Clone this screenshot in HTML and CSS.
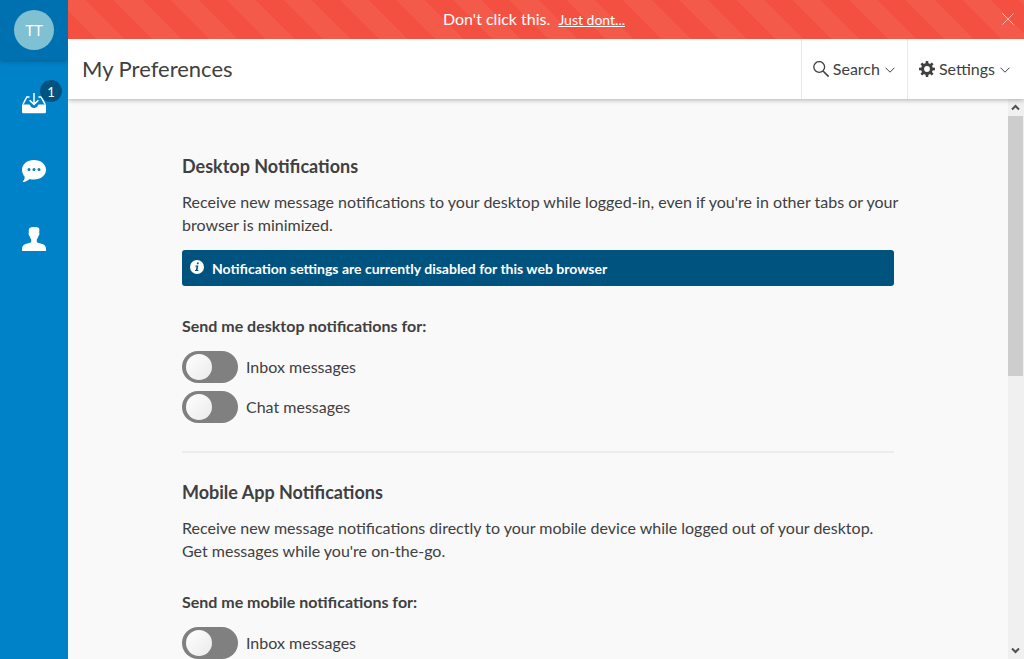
FILE: index.html
```
<!DOCTYPE html>
<html lang="en">
<head>
<meta charset="utf-8">
<meta name="viewport" content="width=device-width, initial-scale=1">
<title>My Preferences</title>
<link rel="stylesheet" href="styles.css">
</head>
<body class="app">
<nav class="sidebar" aria-label="Main">
  <a class="profile" href="#profile"><span class="avatar">TT</span></a>
  <a class="nav-item" href="#inbox" aria-label="Inbox">
    <svg class="nav-icon" viewBox="0 -1 24 24" aria-hidden="true">
      <path d="M7.500 5H4.800L.9 12.500M16.500 5h2.700l3.900 7.500" fill="none" stroke="#fff" stroke-width="1.500"/>
      <path d="M0 12.500h7c.6 0 1 .4 1.200 1 .4 1.500 1.900 2.500 3.800 2.500s3.400-1 3.800-2.500c.2-.6.6-1 1.200-1h7v7.200c0 1-.6 1.600-1.600 1.600H1.600c-1 0-1.600-.6-1.600-1.600z" fill="#fff"/>
      <path d="M12 1v11.200M7.600 8.200l4.400 4.200 4.400-4.200" fill="none" stroke="#fff" stroke-width="1.500"/>
    </svg>
    <span class="badge">1</span>
  </a>
  <a class="nav-item" href="#chat" aria-label="Chat">
    <svg class="nav-icon" viewBox="0 0 24 24" aria-hidden="true">
      <path d="M12 1c6.700 0 12 4.200 12 9.800s-5.300 9.800-12 9.800c-1.500 0-2.900-.2-4.200-.6-1.900 1.600-4.200 2.700-6.500 3-.5 0-.6-.5-.2-.8 1.300-1.300 1.700-2.700 1.500-4.600C1 15.900 0 13.500 0 10.800 0 5.200 5.300 1 12 1z" fill="#fff"/>
      <g fill="#0082c8"><circle cx="7" cy="10.500" r="1.500"/><circle cx="12" cy="10.500" r="1.500"/><circle cx="17" cy="10.500" r="1.500"/></g>
    </svg>
  </a>
  <a class="nav-item" href="#people" aria-label="People">
    <svg class="nav-icon" viewBox="0 0 24 24" aria-hidden="true">
      <path d="M7.200 1.600C8.300.3 10.200 0 12.400 0c2.700 0 5 .5 5 2.600 0 1-.2 2-.3 2.900.6.4.4 1.500.1 2.300-.2.800-.5 1.300-.9 1.500-.3 1.300-.8 2.400-1.500 3.200v2.200c.2.600 1 .9 2 1.200l3.600 1.200c2.200.8 3.600 2.300 3.600 5V24H0v-1.900c0-2.700 1.400-4.200 3.600-5l3.600-1.200c1-.3 1.800-.6 2-1.200v-2.200c-.7-.8-1.200-1.900-1.500-3.200-.4-.2-.7-.7-.9-1.500-.3-.8-.5-1.900.1-2.300-.1-1.300-.4-2.700.3-3.900z" fill="#fff"/>
    </svg>
  </a>
</nav>
<div class="workspace">
  <div class="banner" role="alert">
    <p class="banner-text">Don't click this. <a class="banner-link" href="#dont">Just dont...</a></p>
    <button class="banner-close" type="button" aria-label="Dismiss">
      <svg class="close-icon" viewBox="0 0 14 14" aria-hidden="true"><path d="M.5.500l13 13M13.500.500l-13 13" fill="none" stroke="#fff" stroke-opacity=".65" stroke-width="1.100"/></svg>
    </button>
  </div>
  <header class="toolbar">
    <h1 class="title">My Preferences</h1>
    <button class="tool" type="button">
      <svg class="tool-icon" viewBox="0 0 16 16" aria-hidden="true"><circle cx="6.200" cy="6" r="5.400" fill="none" stroke="#404041" stroke-width="1.300"/><path d="M10 10l5.600 5.600" stroke="#404041" stroke-width="1.600"/></svg>
      <span class="tool-label">Search</span>
      <svg class="chevron" viewBox="0 0 10 6" aria-hidden="true"><path d="M.5.700L5 5.200 9.500.700" fill="none" stroke="#404041"/></svg>
    </button>
    <button class="tool" type="button">
      <svg class="tool-icon" viewBox="0 0 16 16" aria-hidden="true"><g fill="#404041"><path fill-rule="evenodd" d="M8 2.100a5.900 5.900 0 1 0 0 11.800A5.900 5.900 0 0 0 8 2.100zm0 3a2.900 2.900 0 1 1 0 5.800 2.900 2.900 0 0 1 0-5.800z"/><path id="tooth" d="M6.500 3l.3-3h2.400l.3 3zM6.500 13l.3 3h2.400l.3-3z"/><use href="#tooth" transform="rotate(45 8 8)"/><use href="#tooth" transform="rotate(90 8 8)"/><use href="#tooth" transform="rotate(135 8 8)"/></g></svg>
      <span class="tool-label">Settings</span>
      <svg class="chevron" viewBox="0 0 10 6" aria-hidden="true"><path d="M.5.700L5 5.200 9.500.700" fill="none" stroke="#404041"/></svg>
    </button>
  </header>
  <div class="body">
    <main class="content">
      <section class="section">
        <h2 class="heading">Desktop Notifications</h2>
        <p class="copy">Receive new message notifications to your desktop while logged-in, even if you're in other tabs or your browser is minimized.</p>
        <p class="notice">
          <svg class="info-icon" viewBox="0 0 14 14" aria-hidden="true"><circle cx="7" cy="7" r="7" fill="#fff"/><path d="M7.100 2.500h1.800l-.4 1.800H6.700zM5.500 5.400h2.900L7.500 9.900h.9l-.2 1H4.900l.2-1h.7l.7-3.500h-1.200z" fill="#00537f"/></svg>
          <span>Notification settings are currently disabled for this web browser</span>
        </p>
        <fieldset class="options">
          <legend class="legend">Send me desktop notifications for:</legend>
          <label class="option"><input class="toggle" type="checkbox"><span class="option-text">Inbox messages</span></label>
          <label class="option"><input class="toggle" type="checkbox"><span class="option-text">Chat messages</span></label>
        </fieldset>
      </section>
      <section class="section">
        <h2 class="heading">Mobile App Notifications</h2>
        <p class="copy">Receive new message notifications directly to your mobile device while logged out of your desktop. Get messages while you're on-the-go.</p>
        <fieldset class="options">
          <legend class="legend">Send me mobile notifications for:</legend>
          <label class="option"><input class="toggle" type="checkbox"><span class="option-text">Inbox messages</span></label>
        </fieldset>
      </section>
    </main>
    <div class="scrollbar" aria-hidden="true">
      <svg class="scroll-arrow" viewBox="0 0 16 17"><path d="M4 10.500L7.500 7l3.500 3.500" fill="none" stroke="#505050" stroke-width="2"/></svg>
      <div class="scroll-track"><div class="scroll-thumb"></div></div>
      <svg class="scroll-arrow" viewBox="0 0 16 17"><path d="M4 6.500L7.500 10l3.500-3.500" fill="none" stroke="#505050" stroke-width="2"/></svg>
    </div>
  </div>
</div>
</body>
</html>
```
FILE: styles.css
```
* { box-sizing: border-box; }

.app {
  margin: 0;
  height: 100vh;
  display: flex;
  overflow: hidden;
  background: #f9f9f9;
  color: #404041;
  font: 16px/23px Lato, "Liberation Sans", sans-serif;
}

button { font: inherit; color: inherit; border: 0; background: none; cursor: pointer; }

.sidebar {
  flex: 0 0 68px;
  display: flex;
  flex-direction: column;
  background: #0082c8;
}
.profile {
  display: flex;
  align-items: center;
  justify-content: center;
  height: 60px;
  margin-bottom: 9px;
  background: #0071b0;
  box-shadow: 0 1px 5px rgba(0, 0, 0, .3);
  text-decoration: none;
}
.avatar {
  width: 40px;
  height: 40px;
  border-radius: 50%;
  background: #7fc0d3;
  color: #fff;
  font-size: 15px;
  line-height: 41px;
  text-align: center;
}
.nav-item {
  position: relative;
  display: flex;
  align-items: center;
  justify-content: center;
  height: 68px;
}
.nav-icon { width: 24px; height: 24px; }
.badge {
  position: absolute;
  top: 11px;
  right: 6px;
  width: 22px;
  height: 22px;
  border-radius: 50%;
  background: #00537f;
  color: #fff;
  font-size: 13px;
  line-height: 24px;
  text-align: center;
}

.workspace {
  flex: 1;
  min-width: 0;
  display: flex;
  flex-direction: column;
}
.banner {
  display: flex;
  align-items: center;
  height: 39px;
  padding: 0 0 2px 8px;
  background: repeating-linear-gradient(45deg, #f35041 0 20px, #f45a4a 20px 40px);
  color: #fff;
}
.banner-text { flex: 1; margin: 0; text-align: center; }
.banner-link { margin-left: 4px; color: #fff; font-size: 14px; }
.banner-close { display: flex; width: 32px; padding: 10px; }
.close-icon { width: 12px; height: 12px; }

.toolbar {
  z-index: 1;
  display: flex;
  align-items: stretch;
  height: 60px;
  background: #fff;
  box-shadow: 0 1px 5px rgba(0, 0, 0, .3);
  clip-path: inset(0 0 -10px 0);
}
.title {
  flex: 1;
  margin: 0;
  padding-left: 14px;
  font-size: 22px;
  font-weight: 400;
  line-height: 60px;
}
.tool {
  display: flex;
  align-items: center;
  gap: 4px;
  padding: 0 12px 0 11px;
  border-left: 1px solid #e9e9e9;
}
.tool:last-child { padding-right: 14px; }
.tool-icon { width: 16px; height: 16px; }
.tool-label { padding-bottom: 2px; }
.chevron { width: 10px; height: 6px; margin: 2px 0 0 1px; }

.body { flex: 1; min-height: 0; display: flex; }
.content {
  flex: 1;
  min-width: 0;
  padding: 55px 24px;
  overflow-y: auto;
  scrollbar-width: none;
}
.section { max-width: 712px; margin: 0 auto; }
.section + .section { margin-top: 28px; padding-top: 27px; border-top: 2px solid #ececec; }
.heading { margin: 0 0 12px; font-size: 18px; line-height: 24px; }
.copy { margin: 0 -8px 14px 0; }
.notice {
  display: flex;
  align-items: flex-start;
  gap: 8px;
  margin: 0;
  padding: 7px 8px 5px;
  border-radius: 3px;
  background: #00537f;
  color: #fff;
  font-size: 14px;
  font-weight: 700;
  line-height: 24px;
}
.info-icon { flex: none; width: 14px; height: 14px; margin-top: 3px; }
.options {
  display: flex;
  flex-direction: column;
  gap: 8px;
  margin: 28px 0 0;
  padding: 0;
  border: 0;
}
.legend { margin-bottom: 14px; padding: 0; font-weight: 700; }
.option { display: flex; align-items: center; gap: 8px; }
.option-text { padding-bottom: 1px; }
.toggle {
  appearance: none;
  width: 56px;
  height: 32px;
  margin: 0;
  padding: 3px 4px;
  border-radius: 16px;
  background: #808080;
  cursor: pointer;
}
.toggle::before {
  content: "";
  display: block;
  width: 26px;
  height: 26px;
  border-radius: 50%;
  background: linear-gradient(135deg, #fff, #eaeaea);
}
.toggle:checked { padding-left: 26px; background: #0082c8; }

.scrollbar {
  flex: 0 0 16px;
  display: flex;
  flex-direction: column;
  background: #f0f0f0;
}
.scroll-arrow { flex: none; width: 16px; height: 17px; }
.scroll-track { flex: 1; padding-right: 1px; }
.scroll-thumb { height: 49.500%; background: #cdcdcd; }
```
